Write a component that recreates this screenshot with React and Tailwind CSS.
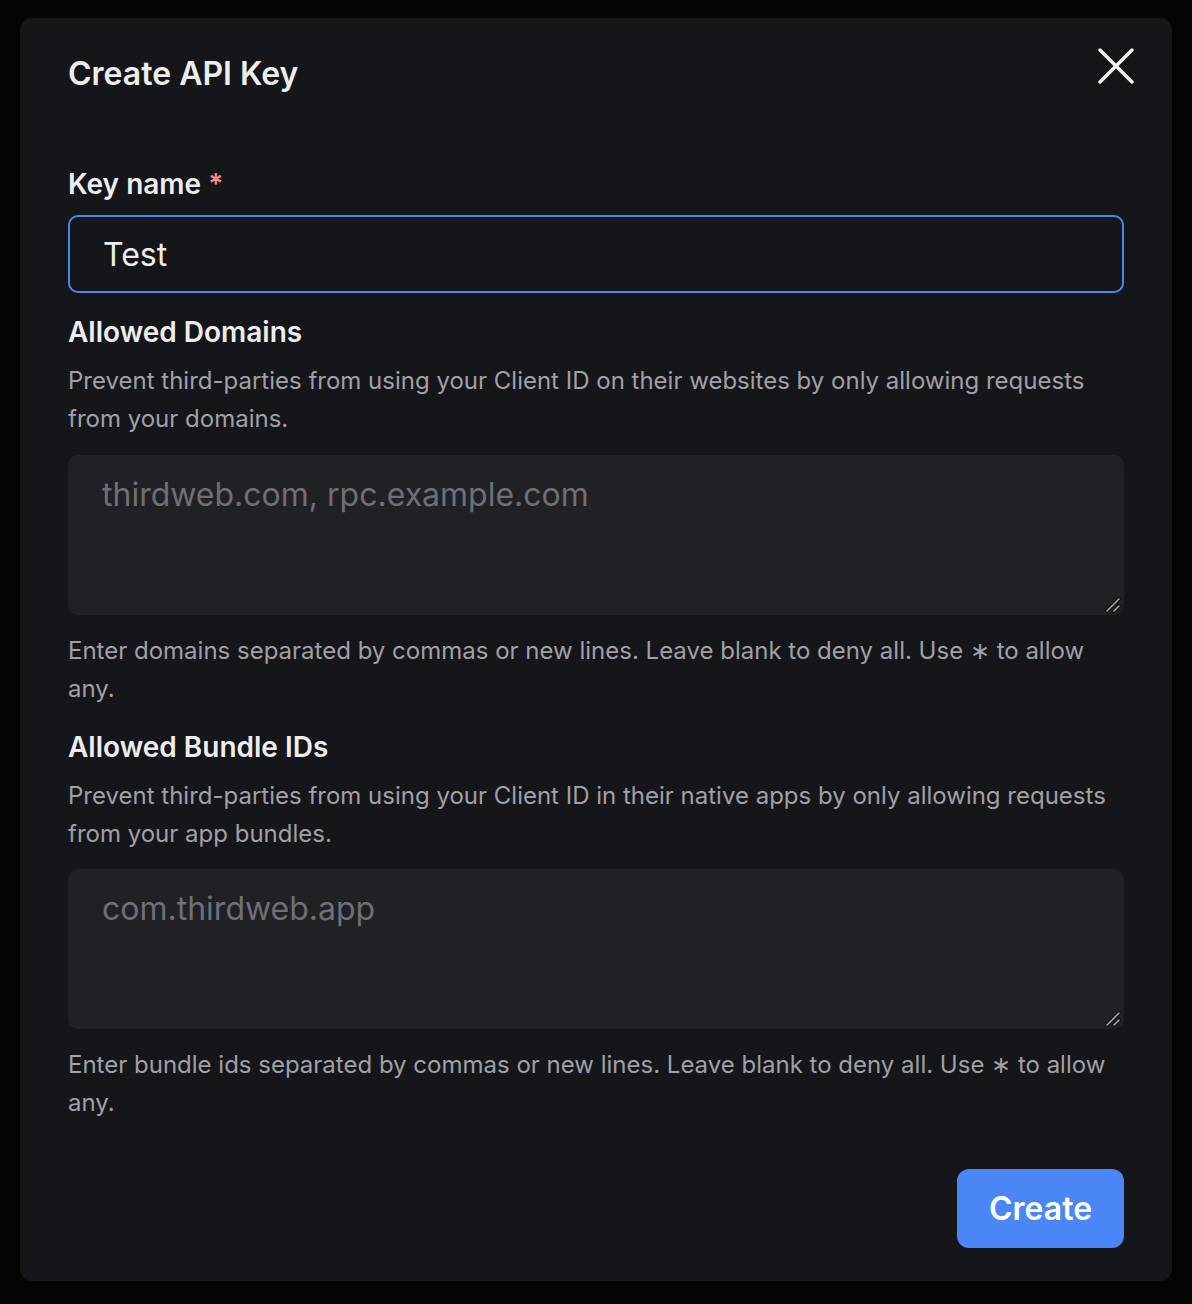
function Grip() {
  return (
    <svg className="pointer-events-none absolute right-[3px] bottom-[2px]" width="16" height="16" viewBox="0 0 16 16" fill="none" strokeLinecap="round">
      <line x1="2" y1="14" x2="14" y2="2" stroke="#0a0a0b" strokeWidth="3.4" />
      <line x1="9" y1="14" x2="14" y2="9" stroke="#0a0a0b" strokeWidth="3.4" />
      <line x1="2" y1="14" x2="14" y2="2" stroke="#a9a9ae" strokeWidth="1.6" />
      <line x1="9" y1="14" x2="14" y2="9" stroke="#a9a9ae" strokeWidth="1.6" />
    </svg>
  )
}

export default function App() {
  return (
    <div className="min-h-[1304px] bg-[#040404] pt-[18px] px-[20px] [color-scheme:dark]" style={{ fontFamily: 'Inter, "Noto Sans", sans-serif' }}>
      <div className="h-[1263px] rounded-[12px] bg-[#151619] px-[48px] pt-[37px] pb-[33px] flex flex-col">

        {/* Header */}
        <div className="flex items-start justify-between">
          <h2 className="text-[32px] leading-[38px] font-semibold text-[#ededed]">Create API Key</h2>
          <button className="-mt-[9px] -mr-[12px] w-[40px] h-[40px] flex items-center justify-center text-[#f2f2f2]">
            <svg width="36" height="36" viewBox="0 0 36 36" fill="none" stroke="currentColor" strokeWidth="3.4" strokeLinecap="round">
              <line x1="2" y1="2" x2="34" y2="34" />
              <line x1="34" y1="2" x2="2" y2="34" />
            </svg>
          </button>
        </div>

        {/* Key name */}
        <label className="mt-[74px] text-[28px] leading-[34px] font-semibold text-[#ededed]">
          Key name <span className="text-[#f28b8b]">*</span>
        </label>
        <input
          defaultValue="Test"
          className="mt-[14px] h-[78px] w-full rounded-[10px] border-2 border-[#4a86f0] bg-transparent px-[33px] text-[32px] text-[#ededed] outline-none"
        />

        {/* Allowed domains */}
        <h3 className="mt-[22px] text-[28px] leading-[34px] font-semibold text-[#ededed]">Allowed Domains</h3>
        <p className="mt-[13px] text-[24px] leading-[38px] text-[#a0a0a6]">
          Prevent third-parties from using your Client ID on their websites by only allowing requests from your domains.
        </p>
        <div className="relative mt-[17px]">
          <textarea
            placeholder="thirdweb.com, rpc.example.com"
            className="block h-[160px] w-full resize-none rounded-[10px] bg-[#202125] px-[34px] py-[20px] text-[32px] leading-[40px] text-[#ededed] placeholder:text-[#6f6f75] outline-none"
          />
          <Grip />
        </div>
        <p className="mt-[17px] text-[24px] leading-[38px] text-[#a0a0a6]">
          Enter domains separated by commas or new lines. Leave blank to deny all. Use ∗ to allow any.
        </p>

        {/* Allowed bundle ids */}
        <h3 className="mt-[22px] text-[28px] leading-[34px] font-semibold text-[#ededed]">Allowed Bundle IDs</h3>
        <p className="mt-[13px] text-[24px] leading-[38px] text-[#a0a0a6]">
          Prevent third-parties from using your Client ID in their native apps by only allowing requests from your app bundles.
        </p>
        <div className="relative mt-[16px]">
          <textarea
            placeholder="com.thirdweb.app"
            className="block h-[160px] w-full resize-none rounded-[10px] bg-[#202125] px-[34px] py-[20px] text-[32px] leading-[40px] text-[#ededed] placeholder:text-[#6f6f75] outline-none"
          />
          <Grip />
        </div>
        <p className="mt-[17px] text-[24px] leading-[38px] text-[#a0a0a6]">
          Enter bundle ids separated by commas or new lines. Leave blank to deny all. Use ∗ to allow any.
        </p>

        <div className="mt-auto flex justify-end">
          <button className="h-[79px] w-[167px] rounded-[12px] bg-[#4a86f5] text-[32px] font-semibold text-white">
            Create
          </button>
        </div>
      </div>
    </div>
  )
}
